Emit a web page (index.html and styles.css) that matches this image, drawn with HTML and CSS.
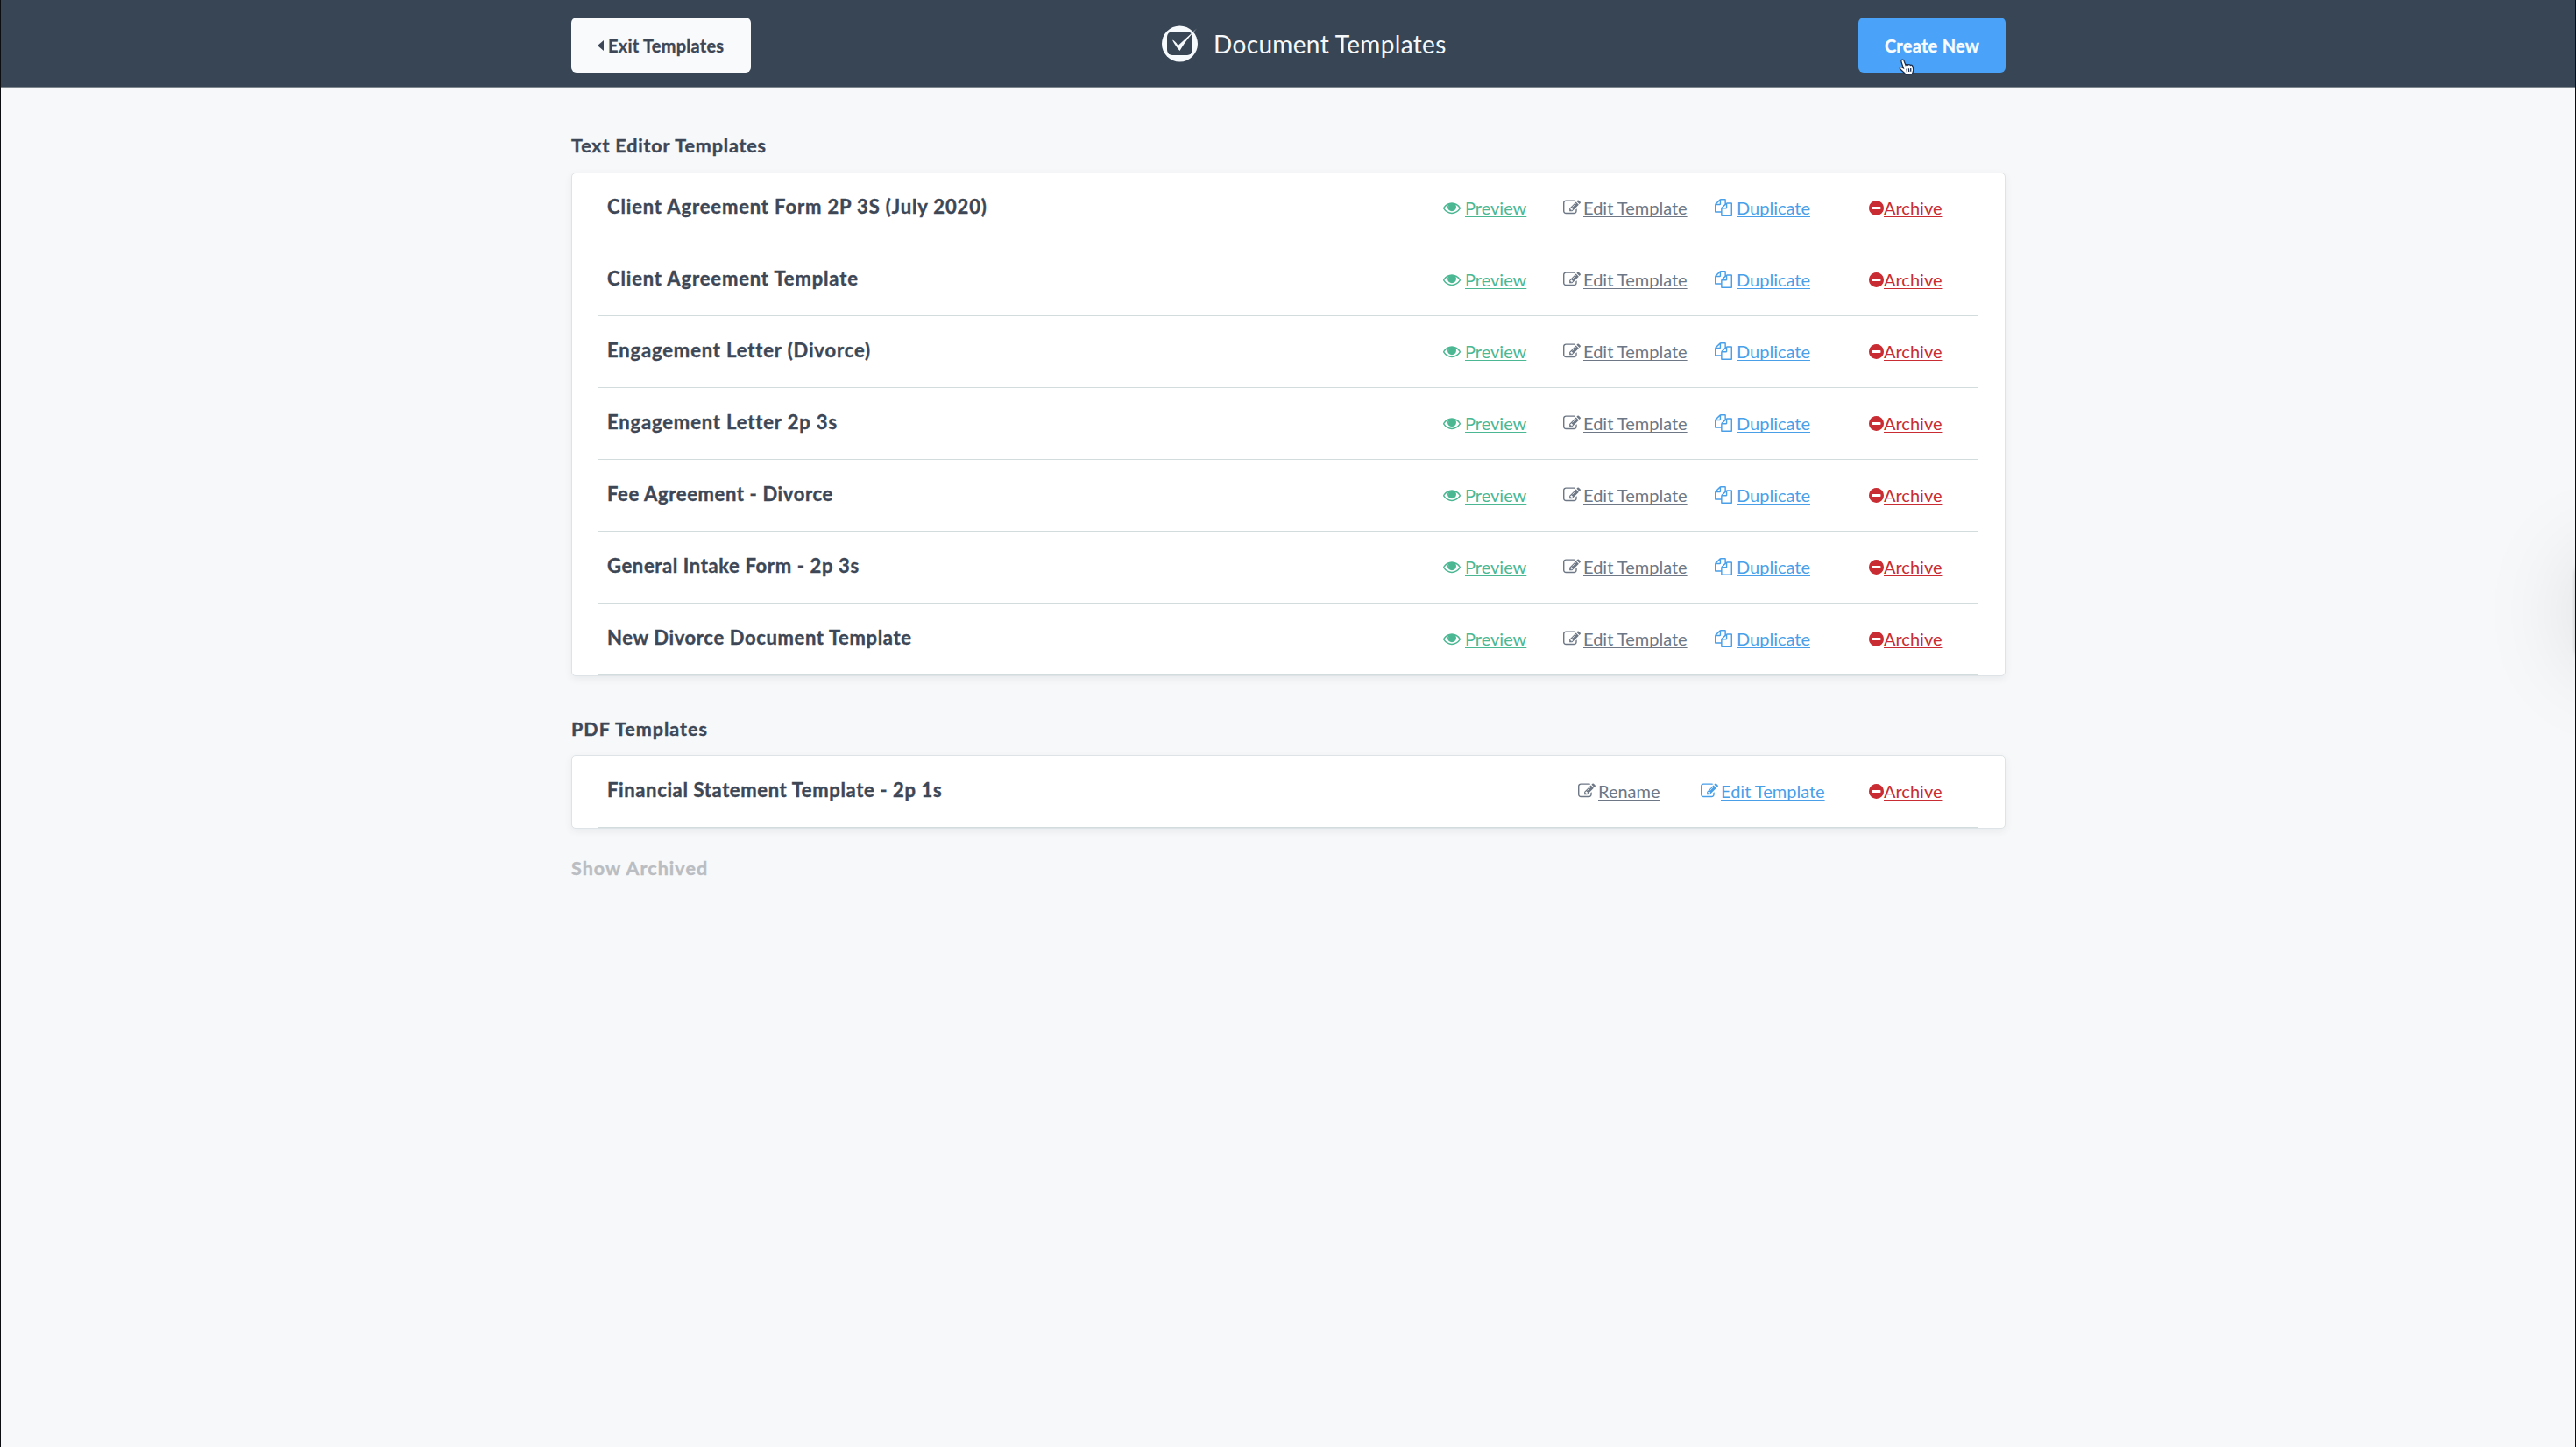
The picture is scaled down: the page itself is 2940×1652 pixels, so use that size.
FILE: index.html
```html
<!DOCTYPE html>
<html lang="en">
<head>
<meta charset="utf-8">
<title>Document Templates</title>
<link rel="stylesheet" href="styles.css">
</head>
<body>
<svg class="sprite" aria-hidden="true">
  <symbol id="eye" viewBox="0 0 1792 1792"><path d="M1664 960q-152-236-381-353 61 104 61 225 0 185-131.5 316.5t-316.5 131.5-316.5-131.5-131.5-316.5q0-121 61-225-229 117-381 353 133 205 333.5 326.5t434.5 121.5 434.5-121.5 333.5-326.5zm-720-384q0-20-14-34t-34-14q-125 0-214.5 89.5t-89.5 214.5q0 20 14 34t34 14 34-14 14-34q0-86 61-147t147-61q20 0 34-14t14-34zm848 384q0 34-20 69-140 230-376.5 368.5t-499.5 138.5-499.5-139-376.5-368q-20-35-20-69t20-69q140-229 376.5-368t499.5-139 499.5 139 376.5 368q20 35 20 69z"/><circle cx="896" cy="850" r="330"/></symbol>
  <symbol id="edit" viewBox="0 0 1792 1792"><path d="M888 1184l116-116-152-152-116 116v56h96v96h56zm440-720q-16-16-33 1l-350 350q-17 17-1 33t33-1l350-350q17-17 1-33zm80 594v190q0 119-84.5 203.5t-203.5 84.5h-832q-119 0-203.5-84.5t-84.5-203.5v-832q0-119 84.5-203.5t203.5-84.5h832q63 0 117 25 15 7 18 23 3 17-9 29l-49 49q-14 14-32 8-23-6-45-6h-832q-66 0-113 47t-47 113v832q0 66 47 113t113 47h832q66 0 113-47t47-113v-126q0-13 9-22l64-64q15-15 35-7t20 29zm-96-738l288 288-672 672h-288v-288zm444 132l-92 92-288-288 92-92q28-28 68-28t68 28l152 152q28 28 28 68t-28 68z"/></symbol>
  <symbol id="copy" viewBox="0 0 1792 1792"><path d="M1696 384q40 0 68 28t28 68v1216q0 40-28 68t-68 28h-960q-40 0-68-28t-28-68v-288h-544q-40 0-68-28t-28-68v-672q0-40 20-88t48-76l408-408q28-28 76-48t88-20h416q40 0 68 28t28 68v328q68-40 128-40h416zm-544 213l-299 299h299v-299zm-640-384l-299 299h299v-299zm196 647l316-316v-416h-384v416q0 40-28 68t-68 28h-416v640h512v-256q0-40 20-88t48-76zm956 804v-1152h-384v416q0 40-28 68t-68 28h-416v640h896z"/></symbol>
  <symbol id="minus" viewBox="128 128 1536 1536"><path d="M1344 960v-128q0-26-19-45t-45-19h-768q-26 0-45 19t-19 45v128q0 26 19 45t45 19h768q26 0 45-19t19-45zm320-64q0 209-103 385.5t-279.5 279.5-385.5 103-385.5-103-279.5-279.5-103-385.5 103-385.5 279.5-279.5 385.5-103 385.5 103 279.5 279.5 103 385.5z"/></symbol>
</svg>
<header class="topbar">
  <div class="topbar-inner">
    <a class="btn btn-light"><svg class="caret" viewBox="0 0 7 12"><path d="M7 0v12L0 6z"/></svg><span>Exit Templates</span></a>
    <h1 class="title">
      <svg class="logo" viewBox="0 0 42 42"><circle cx="20.5" cy="21" r="20.5" fill="#f7fafd"/><rect x="6" y="7" width="29" height="27" rx="6" fill="#374555"/><path d="M12 16.5c2 .5 4.500 3 6.500 6.500L40 3.500C34 10 27 18 20.500 29c-2-2-6-7-8.500-12.500z" fill="#f7fafd"/><path d="M35 6.500l3-3" stroke="#374555"/></svg>
      <span>Document Templates</span>
    </h1>
    <a class="btn btn-primary"><span>Create New</span>
      <svg class="cursor" viewBox="0 0 18 18"><path d="M3.200 1.200C4.500.5 5.500 1.500 6 3l1.600 4c.7-1.200 2-1 2.500-.2.700-.9 2-.6 2.500.3 1-.7 2.200 0 2.500 1.200.4 2 1.600 3.500.2 6.500l-.8 1.700-6.800.6C6 15 3.500 13 1.500 11.200.5 10 2 8.700 3.300 9.300l1.800 1L3 4c-.4-1.200-.4-2.300.2-2.800z"/><path class="knuckle" d="M8.500 11l.5 3.500M10.800 10.700l.3 3.500M13 10.500v3.500"/></svg>
    </a>
  </div>
</header>
<main class="content">
  <h2 class="heading">Text Editor Templates</h2>
  <section class="card card-text">
    <div class="row"><span class="name roomy">Client Agreement Form 2P 3S (July 2020)</span><a class="act green"><svg><use href="#eye"/></svg><u>Preview</u></a><a class="act gray"><svg><use href="#edit"/></svg><u>Edit Template</u></a><a class="act blue wide"><svg><use href="#copy"/></svg><u>Duplicate</u></a><a class="act red"><svg><use href="#minus"/></svg><u>Archive</u></a></div>
    <div class="row"><span class="name roomy">Client Agreement Template</span><a class="act green"><svg><use href="#eye"/></svg><u>Preview</u></a><a class="act gray"><svg><use href="#edit"/></svg><u>Edit Template</u></a><a class="act blue wide"><svg><use href="#copy"/></svg><u>Duplicate</u></a><a class="act red"><svg><use href="#minus"/></svg><u>Archive</u></a></div>
    <div class="row"><span class="name roomy">Engagement Letter (Divorce)</span><a class="act green"><svg><use href="#eye"/></svg><u>Preview</u></a><a class="act gray"><svg><use href="#edit"/></svg><u>Edit Template</u></a><a class="act blue wide"><svg><use href="#copy"/></svg><u>Duplicate</u></a><a class="act red"><svg><use href="#minus"/></svg><u>Archive</u></a></div>
    <div class="row"><span class="name roomy">Engagement Letter 2p 3s</span><a class="act green"><svg><use href="#eye"/></svg><u>Preview</u></a><a class="act gray"><svg><use href="#edit"/></svg><u>Edit Template</u></a><a class="act blue wide"><svg><use href="#copy"/></svg><u>Duplicate</u></a><a class="act red"><svg><use href="#minus"/></svg><u>Archive</u></a></div>
    <div class="row"><span class="name">Fee Agreement - Divorce</span><a class="act green"><svg><use href="#eye"/></svg><u>Preview</u></a><a class="act gray"><svg><use href="#edit"/></svg><u>Edit Template</u></a><a class="act blue wide"><svg><use href="#copy"/></svg><u>Duplicate</u></a><a class="act red"><svg><use href="#minus"/></svg><u>Archive</u></a></div>
    <div class="row"><span class="name">General Intake Form - 2p 3s</span><a class="act green"><svg><use href="#eye"/></svg><u>Preview</u></a><a class="act gray"><svg><use href="#edit"/></svg><u>Edit Template</u></a><a class="act blue wide"><svg><use href="#copy"/></svg><u>Duplicate</u></a><a class="act red"><svg><use href="#minus"/></svg><u>Archive</u></a></div>
    <div class="row"><span class="name">New Divorce Document Template</span><a class="act green"><svg><use href="#eye"/></svg><u>Preview</u></a><a class="act gray"><svg><use href="#edit"/></svg><u>Edit Template</u></a><a class="act blue wide"><svg><use href="#copy"/></svg><u>Duplicate</u></a><a class="act red"><svg><use href="#minus"/></svg><u>Archive</u></a></div>
  </section>
  <h2 class="heading heading-pdf">PDF Templates</h2>
  <section class="card">
    <div class="row row-pdf"><span class="name">Financial Statement Template - 2p 1s</span><a class="act gray"><svg><use href="#edit"/></svg><u>Rename</u></a><a class="act blue"><svg><use href="#edit"/></svg><u>Edit Template</u></a><a class="act red"><svg><use href="#minus"/></svg><u>Archive</u></a></div>
  </section>
  <a class="archived">Show Archived</a>
</main>
<div class="edge-tab"></div>
</body>
</html>
```
FILE: styles.css
```css
* { box-sizing: border-box; }
body {
  margin: 0;
  height: 1652px;
  position: relative;
  overflow: hidden;
  border-left: 1px solid #0b0d10;
  border-right: 1px solid #0b0d10;
  background: #f7f8fa;
  color: #3d4756;
  font-family: Lato, "Liberation Sans", sans-serif;
}
.sprite { display: none; }
.topbar {
  height: 100px;
  background: #374555;
  border-bottom: 1px solid #7d858d;
}
.topbar-inner {
  width: 1637px;
  margin-left: 651px;
  padding-top: 20px;
  display: grid;
  grid-template-columns: 674px 1fr 168px;
}
.btn {
  height: 63px;
  border-radius: 6px;
  display: flex;
  align-items: center;
  font-size: 20px;
  font-weight: 700;
  letter-spacing: .25px;
  white-space: nowrap;
  -webkit-text-stroke: .3px currentColor;
}
.btn-light {
  width: 205px;
  padding-left: 30px;
  gap: 5px;
  background: #f8fafc;
}
.caret { width: 7px; height: 12px; fill: #3d4756; }
.btn-primary {
  position: relative;
  justify-content: center;
  background: #4aa3f8;
  color: #f8fcff;
}
.cursor {
  position: absolute;
  left: 46px;
  top: 47px;
  width: 19px;
  height: 19px;
  overflow: visible;
  fill: #fff;
  stroke: #1b2c4c;
  stroke-width: 1.2;
}
.knuckle { fill: none; }
.title {
  margin: 0;
  height: 60px;
  display: flex;
  align-items: center;
  gap: 17px;
  color: #f5f8fb;
  font-size: 28px;
  letter-spacing: .35px;
  font-weight: 400;
  white-space: nowrap;
}
.logo { width: 42px; height: 42px; }
.content {
  width: 1637px;
  margin-left: 651px;
  display: flex;
  flex-direction: column;
}
.heading {
  margin: 0;
  height: 97px;
  padding-top: 51px;
  font-size: 21.5px;
  letter-spacing: .85px;
  line-height: 30px;
  font-weight: 700;
  -webkit-text-stroke: .4px currentColor;
}
.heading-pdf { height: 90px; padding-top: 45px; letter-spacing: 1px; }
.card {
  padding: 0 31px 0 29px;
  background: #fff;
  border: 1px solid #dde3e6;
  border-radius: 5px;
  box-shadow: 0 3px 8px rgba(40, 60, 70, .08);
}
.row {
  height: 82px;
  display: grid;
  grid-template-columns: 1fr 137px 173px 176px 124px;
  border-bottom: 1px solid #d3dcdd;
  padding-left: 11px;
  line-height: 30px;
  white-space: nowrap;
}
.card-text .row:first-child { height: 81px; }
.row-pdf { grid-template-columns: 1fr 140px 192px 124px; }
.name {
  align-self: end;
  margin-bottom: 27px;
  font-size: 22px;
  letter-spacing: .63px;
  font-weight: 700;
  -webkit-text-stroke: .4px currentColor;
}
.roomy { letter-spacing: .85px; }
.act {
  align-self: end;
  margin-bottom: 26px;
  display: flex;
  align-items: center;
  gap: 3px;
  font-size: 20px;
}
.act u { text-decoration-thickness: 1px; text-underline-offset: 2px; text-decoration-skip-ink: none; }
.act svg { width: 20px; height: 20px; fill: currentColor; }
.green { color: #4cb893; gap: 5px; }
.gray { color: #6d7785; }
.blue { color: #4a9fe9; }
.wide { gap: 5px; }
.red { color: #c92c33; gap: 0; }
.red svg { width: 17px; height: 17px; }
.archived {
  margin-top: 30px;
  color: #babdc1;
  font-size: 21.5px;
  letter-spacing: 1.05px;
  line-height: 30px;
  font-weight: 700;
  -webkit-text-stroke: .4px currentColor;
}
.edge-tab {
  position: absolute;
  left: 2939px;
  top: 640px;
  width: 120px;
  height: 116px;
  border-radius: 16px;
  box-shadow: 0 0 110px rgba(0, 0, 0, .13), 0 0 5px rgba(0, 0, 0, .25);
}
```
